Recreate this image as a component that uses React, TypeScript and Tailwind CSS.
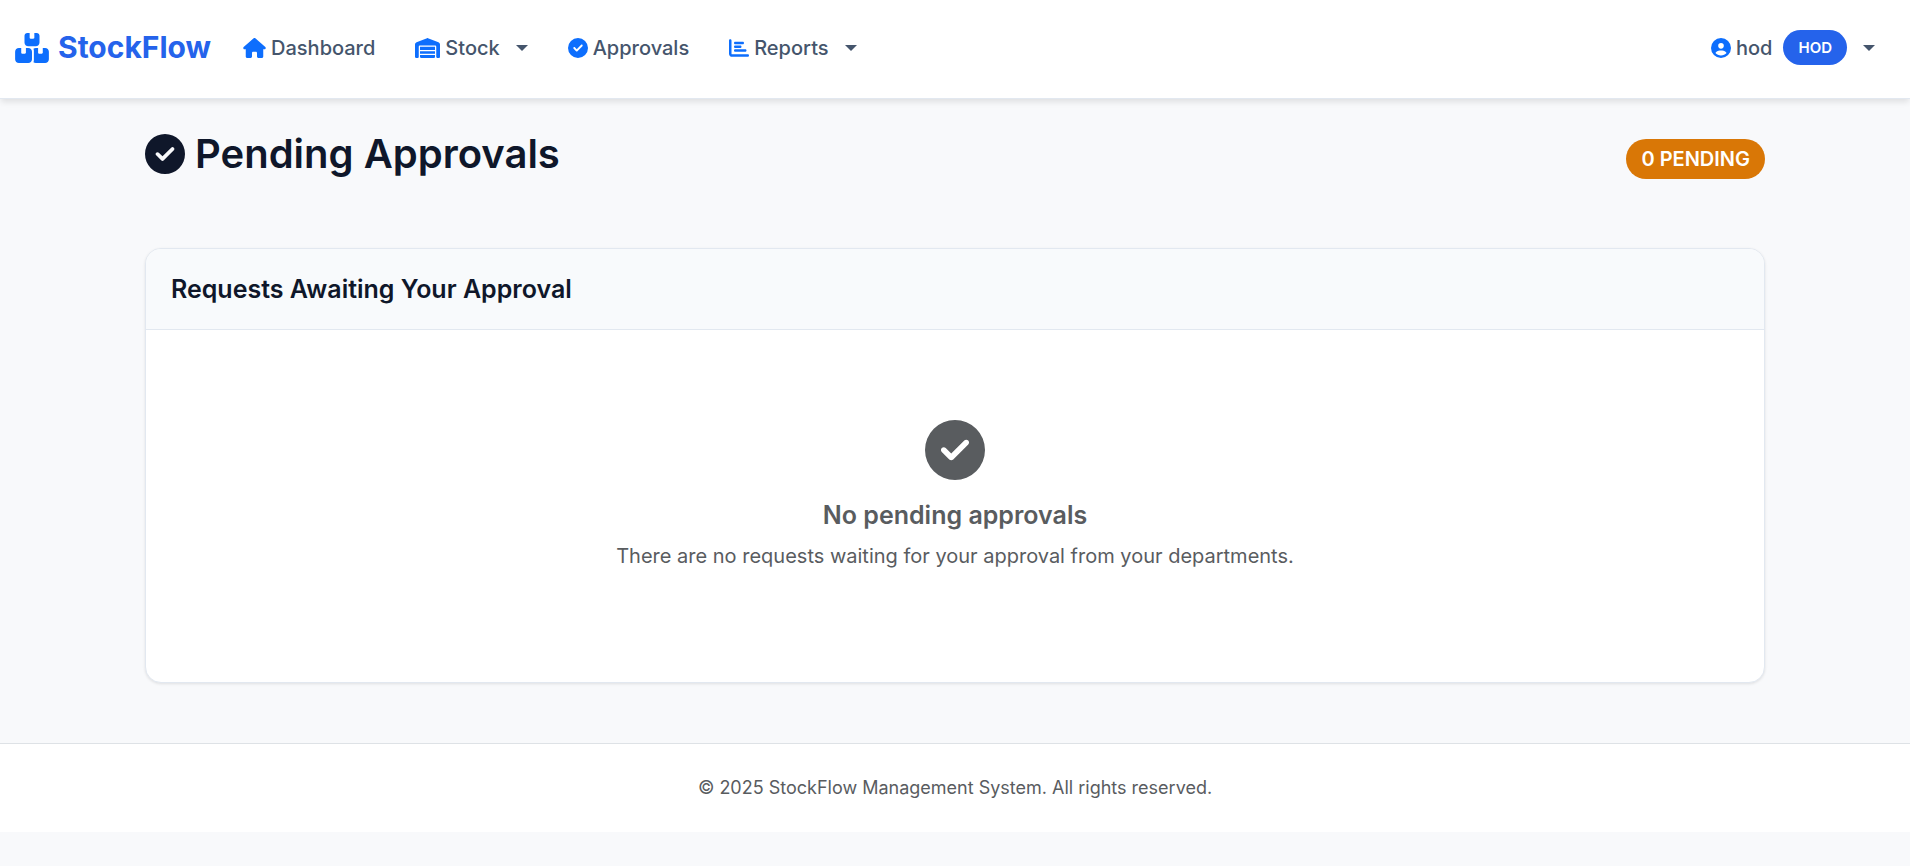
import type { ReactNode } from "react";
import {
  FaBoxesStacked,
  FaChartBar,
  FaCircleCheck,
  FaCircleUser,
  FaHouse,
  FaWarehouse,
} from "react-icons/fa6";

function Caret() {
  return (
    <svg viewBox="0 0 12 6" className="ml-[11px] h-1.5 w-3 fill-current" aria-hidden="true">
      <path d="M0 0h12L6 6z" />
    </svg>
  );
}

type NavItem = { label: string; icon: ReactNode; menu?: boolean };

const navItems: NavItem[] = [
  { label: "Dashboard", icon: <FaHouse className="h-5 w-[23px]" /> },
  { label: "Stock", icon: <FaWarehouse className="h-5 w-[25px]" />, menu: true },
  { label: "Approvals", icon: <FaCircleCheck className="size-5" /> },
  { label: "Reports", icon: <FaChartBar className="size-5" />, menu: true },
];

function NavEntry({ item }: { item: NavItem }) {
  const content = (
    <>
      <span className="text-[#0d6efd]">{item.icon}</span>
      <span>{item.label}</span>
      {item.menu && <Caret />}
    </>
  );
  const style = "flex items-center gap-[5px] px-5 py-2.5";
  return (
    <li>
      {item.menu ? (
        <button type="button" aria-haspopup="menu" className={style}>
          {content}
        </button>
      ) : (
        <a href="#" className={style}>
          {content}
        </a>
      )}
    </li>
  );
}

function Header() {
  return (
    <header className="relative border-b border-slate-200 bg-white shadow-[0_4px_6px_-1px_rgba(0,0,0,0.1)]">
      <nav className="flex items-center px-[15px] pt-5 pb-[23px] text-[20px] leading-[30px] font-medium text-slate-600">
        <a
          href="#"
          className="mr-3 flex items-center gap-[9px] text-[30px] leading-[45px] font-bold text-[#2563eb]"
        >
          <FaBoxesStacked className="h-[30px] w-[34px] text-[#0d6efd]" />
          StockFlow
        </a>
        <ul className="flex items-center">
          {navItems.map((item) => (
            <NavEntry key={item.label} item={item} />
          ))}
        </ul>
        <button
          type="button"
          aria-haspopup="menu"
          className="ml-auto flex items-center gap-[5px] px-5 py-2.5"
        >
          <FaCircleUser className="size-5 text-[#0d6efd]" />
          <span>hod</span>
          <span className="ml-1.5 rounded-full bg-[#2563eb] px-[15px] py-2 text-[15px] leading-[19px] font-semibold text-white">
            HOD
          </span>
          <Caret />
        </button>
      </nav>
    </header>
  );
}

export default function App() {
  return (
    <div className="min-h-screen bg-[#f8f9fb] font-['Inter','Liberation_Sans',sans-serif] text-[#0f172a]">
      <Header />
      <main className="mx-auto max-w-[1650px] px-[15px] pt-[30px] pb-[60px]">
        <div className="mb-[69px] flex items-start justify-between">
          <h1 className="flex items-center gap-2.5 text-[40px] leading-[50px] font-semibold">
            <FaCircleCheck className="size-10" />
            Pending Approvals
          </h1>
          <span className="mt-2.5 rounded-full bg-[#d97706] px-[15px] py-2 text-[20px] leading-6 font-semibold text-white">
            0 PENDING
          </span>
        </div>
        <section className="overflow-hidden rounded-2xl border border-slate-200 bg-white shadow-[0_1px_3px_rgba(0,0,0,0.1)]">
          <h2 className="border-b border-slate-200 bg-slate-50 px-[25px] py-[25px] text-[25px] leading-[30px] font-semibold">
            Requests Awaiting Your Approval
          </h2>
          <div className="flex flex-col items-center px-[25px] pt-[90px] pb-[110px] text-center text-[#595c5f]">
            <FaCircleCheck className="size-[60px]" />
            <h3 className="mt-5 mb-2.5 text-[25px] leading-[30px] font-semibold">
              No pending approvals
            </h3>
            <p className="text-[20px] leading-8">
              There are no requests waiting for your approval from your departments.
            </p>
          </div>
        </section>
      </main>
      <footer className="border-t border-[#dee2e6] bg-white py-[30px] text-center text-[18px] leading-7 text-[#595c5f]">
        © 2025 StockFlow Management System. All rights reserved.
      </footer>
    </div>
  );
}
